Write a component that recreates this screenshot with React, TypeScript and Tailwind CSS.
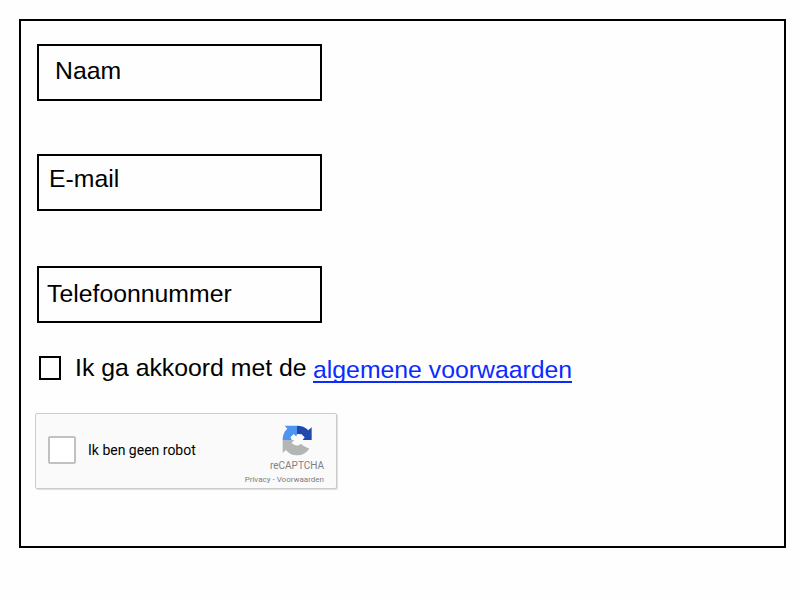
function RecaptchaLogo() {
  return (
    <svg width="32" height="32" viewBox="33 21 96 96" className="block">
      <path d="M81 23C94 23 106 27 115 37L125 28V66H98L104 58C98 52 96 50 94 48L88 54L81 48Z" fill="#2048ae" />
      <path d="M81 23H44L52 32C42 40 38 52 38 66H66L62 58L71 49L79 56L81 48Z" fill="#4f94ef" />
      <path d="M38 66H69L75 68L67 74C72 83 84 86 92 77L101 84L118 92C107 107 94 112 81 112C66 112 56 106 48 96L38 105Z" fill="#b4b6b5" />
      <path d="M66 66L62 58L71 49L79 56L83 48Q94 46 98 55L89 61L96 66Q98 74 90 78L82 70L75 79Q65 79 66 73L74 66Z" fill="#fdfdfd" />
    </svg>
  );
}

function Field({ label, className }: { label: string; className: string }) {
  return (
    <div className={`h-[57px] w-[285px] border-2 border-black leading-7 ${className}`}>
      {label}
    </div>
  );
}

export default function App() {
  return (
    <div className="h-[600px] w-[800px] bg-[#fefefe] pl-[19px] pt-[19px] font-['Liberation_Sans',Arial,sans-serif] text-[24.8px] text-black">
      <form className="flex h-[529px] w-[767px] flex-col items-start border-2 border-black pl-[14px] pt-[23px]">
        <Field label="Naam" className="ml-[2px] pl-[16px] pt-[11px]" />
        <Field label="E-mail" className="ml-[2px] mt-[53px] pl-[10px] pt-[9px]" />
        <Field label="Telefoonnummer" className="ml-[2px] mt-[55px] pl-[8px] pt-[12px]" />
        <div className="ml-1 mt-[31px] flex h-[32px] items-start leading-7 whitespace-nowrap">
          <span className="mt-[2px] h-[24px] w-[22px] border-2 border-black" />
          <span className="ml-[14px] w-[238px]">Ik ga akkoord met de</span>
          <a className="mt-[2px] h-[27px] border-b-2 border-[#0b2bff] text-[#0b2bff]">algemene voorwaarden</a>
        </div>
        <div className="mt-[27px] flex h-[76px] w-[302px] items-start rounded-[2px] border border-[#cccccc] bg-[#fafafa] font-[Roboto,sans-serif] shadow-[1px_1px_1px_#dddddd]">
          <span className="ml-[12px] mt-[22px] h-[28px] w-[28px] rounded-[2px] border-2 border-[#c1c1c1] bg-white" />
          <span className="ml-[12px] mt-[26px] text-[14px] leading-5 whitespace-nowrap">Ik ben geen robot</span>
          <div className="ml-auto mr-[12px] flex flex-col items-end whitespace-nowrap text-[#808080]">
            <div className="mr-[11px] mt-[11px]"><RecaptchaLogo /></div>
            <span className="mt-[3px] text-[10px] leading-3">reCAPTCHA</span>
            <span className="mt-[3px] text-[8px] leading-[10px]">Privacy - Voorwaarden</span>
          </div>
        </div>
      </form>
    </div>
  );
}
